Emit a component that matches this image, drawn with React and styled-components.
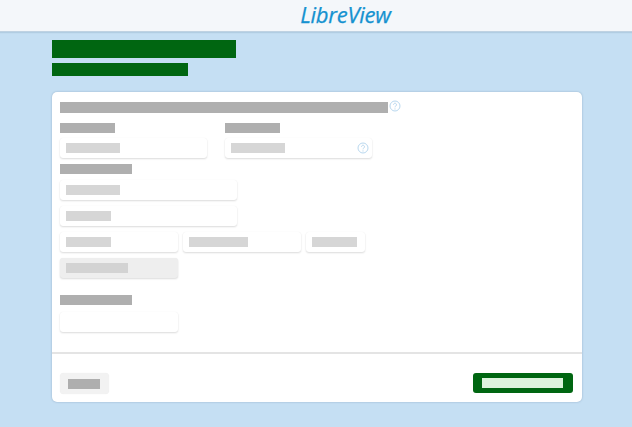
import React from 'react'
import styled, { createGlobalStyle } from 'styled-components'

const GlobalStyle = createGlobalStyle`
  html, body {
    margin: 0;
    padding: 0;
    height: 100%;
    background: #c5dff3;
    font-family: "Open Sans", "Liberation Sans", sans-serif;
  }
`

const Page = styled.div`
  width: 632px;
  height: 427px;
  overflow: hidden;
  background: #c5dff3;
`

const Header = styled.header`
  height: 31px;
  display: flex;
  align-items: center;
  justify-content: center;
  background: #f4f7fa;
  border-bottom: 1px solid #bfd2e2;
  box-shadow: 0 1px 1px rgba(120, 150, 175, 0.25);
`

const Logo = styled.div`
  margin-left: 59px;
  margin-top: -3px;
  font-family: "Open Sans", sans-serif;
  font-style: italic;
  font-size: 22px;
  letter-spacing: -0.25px;
  line-height: 26px;
  color: #1592d0;
  -webkit-text-stroke: 0.25px #1592d0;
`

const Main = styled.main`
  width: 530px;
  margin-left: 52px;
  padding-top: 8px;
`

const Title = styled.div`
  width: ${p => p.$w}px;
  height: ${p => p.$h}px;
  margin-bottom: ${p => p.$mb}px;
  background: #006611;
`

const Card = styled.section`
  width: 530px;
  height: 310px;
  margin-top: 16px;
  background: #fff;
  border-radius: 5px;
  box-shadow: 0 0 2px rgba(110, 140, 170, 0.65);
  display: flex;
  flex-direction: column;
`

const CardBody = styled.div`
  height: 262px;
  box-sizing: border-box;
  padding: 10px 8px 0;
  border-bottom: 2px solid #e4e4e4;
  display: flex;
  flex-direction: column;
  align-items: flex-start;
`

const Heading = styled.div`
  display: flex;
  align-items: flex-start;
  gap: 1px;
  margin-bottom: 10px;
`

const Label = styled.div`
  width: ${p => p.$w}px;
  height: ${p => p.$h || 10}px;
  background: #afafaf;
`

const Help = styled.svg`
  width: 12px;
  height: 12px;
  flex: none;
  margin-top: ${p => p.$mt || 0}px;
  margin-bottom: ${p => p.$mt || 0}px;
  margin-right: ${p => p.$mr || 0}px;
`

const HelpIcon = ({ color = '#b9d8ef', mt, mr }) => (
  <Help viewBox="0 0 12 12" $mt={mt} $mr={mr}>
    <circle cx="6" cy="6" r="5" fill="none" stroke={color} strokeWidth="1" />
    <path d="M4.5 4.7a1.5 1.5 0 1 1 2.3 1.3c-.6.4-.8.7-.8 1.3" fill="none" stroke={color} strokeWidth="1" />
    <circle cx="6" cy="8.9" r=".6" fill={color} />
  </Help>
)

const Columns = styled.div`
  display: flex;
  gap: 18px;
`

const Field = styled.div`
  display: flex;
  flex-direction: column;
  gap: 5px;
`

const Input = styled.div`
  width: ${p => p.$w}px;
  height: 20px;
  box-sizing: border-box;
  padding: 0 6px;
  display: flex;
  align-items: center;
  justify-content: space-between;
  border-radius: 3px;
  background: ${p => (p.$disabled ? '#eeeeee' : '#fff')};
  box-shadow: 0 1px 2px rgba(0, 0, 0, 0.14), 0 0 1px rgba(0, 0, 0, 0.05);
`

const Value = styled.div`
  width: ${p => p.$w}px;
  height: 10px;
  background: ${p => (p.$disabled ? '#d3d3d3' : '#d6d6d6')};
`

const Stack = styled.div`
  display: flex;
  flex-direction: column;
  gap: ${p => p.$gap || 6}px;
  margin-top: ${p => p.$mt || 0}px;
`

const Row = styled.div`
  display: flex;
  gap: 5px;
`

const CardFooter = styled.div`
  flex: 1;
  padding: 19px 9px 0 8px;
  display: flex;
  justify-content: space-between;
  align-items: flex-start;
`

const CancelButton = styled.div`
  width: 49px;
  height: 21px;
  box-sizing: border-box;
  padding-left: 8px;
  display: flex;
  align-items: center;
  border-radius: 4px;
  background: #f2f2f2;
  box-shadow: 0 0 1px rgba(0, 0, 0, 0.1);
`

const CancelText = styled.div`
  width: 32px;
  height: 10px;
  background: #aeaeae;
`

const SubmitButton = styled.div`
  width: 100px;
  height: 20px;
  box-sizing: border-box;
  padding-left: 9px;
  display: flex;
  align-items: center;
  border-radius: 3px;
  background: #006611;
`

const SubmitText = styled.div`
  width: 81px;
  height: 10px;
  background: #dcf3dc;
`

const App = () => (
  <Page>
    <GlobalStyle />
    <Header>
      <Logo>LibreView</Logo>
    </Header>
    <Main>
      <Title $w={184} $h={18} $mb={5} />
      <Title $w={136} $h={13} $mb={0} />
      <Card>
        <CardBody>
          <Heading>
            <Label $w={328} $h={11} />
            <HelpIcon mt={-2} />
          </Heading>
          <Columns>
            <Field>
              <Label $w={55} />
              <Input $w={147}>
                <Value $w={54} />
              </Input>
            </Field>
            <Field>
              <Label $w={55} />
              <Input $w={147}>
                <Value $w={54} />
                <HelpIcon mr={-3} />
              </Input>
            </Field>
          </Columns>
          <Stack $mt={6}>
            <Label $w={72} />
            <Input $w={177}>
              <Value $w={54} />
            </Input>
            <Input $w={177}>
              <Value $w={45} />
            </Input>
            <Row>
              <Input $w={118}>
                <Value $w={45} />
              </Input>
              <Input $w={118}>
                <Value $w={59} />
              </Input>
              <Input $w={59}>
                <Value $w={45} />
              </Input>
            </Row>
            <Input $w={118} $disabled>
              <Value $w={62} $disabled />
            </Input>
          </Stack>
          <Stack $mt={17} $gap={7}>
            <Label $w={72} />
            <Input $w={118} />
          </Stack>
        </CardBody>
        <CardFooter>
          <CancelButton>
            <CancelText />
          </CancelButton>
          <SubmitButton>
            <SubmitText />
          </SubmitButton>
        </CardFooter>
      </Card>
    </Main>
  </Page>
)

export default App
